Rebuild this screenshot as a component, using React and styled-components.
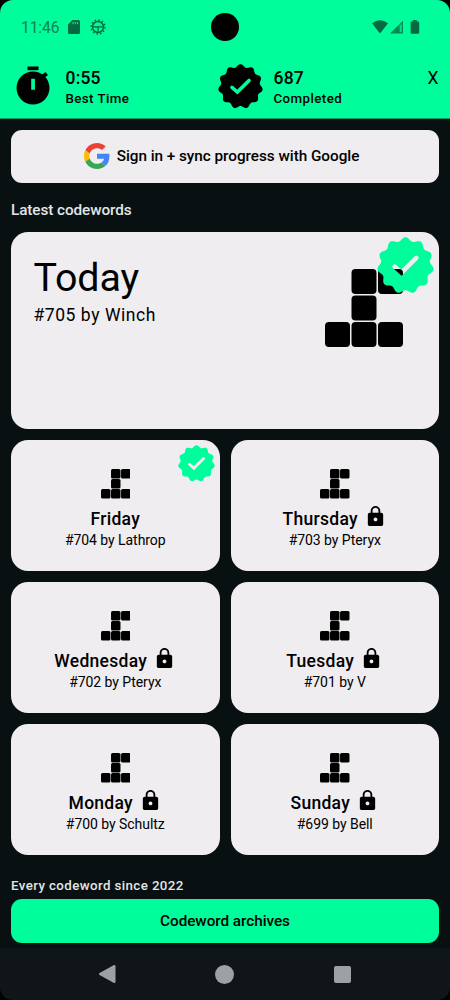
import React from "react";
import styled, { createGlobalStyle } from "styled-components";

const puzzles = [
  { day: "Friday", info: "#704 by Lathrop", done: true },
  { day: "Thursday", info: "#703 by Pteryx", locked: true },
  { day: "Wednesday", info: "#702 by Pteryx", locked: true },
  { day: "Tuesday", info: "#701 by V", locked: true },
  { day: "Monday", info: "#700 by Schultz", locked: true },
  { day: "Sunday", info: "#699 by Bell", locked: true },
];

// eleven soft points around a circle of radius 50
const burst = () => {
  const points = [];
  for (let i = 0; i < 220; i++) {
    const a = (i / 220) * Math.PI * 2;
    const r = 46.4 + 3.2 * Math.cos(a * 11);
    points.push(
      `${(50 + r * Math.sin(a)).toFixed(2)} ${(50 - r * Math.cos(a)).toFixed(2)}`
    );
  }
  return "M" + points.join("L") + "Z";
};
const burstPath = burst();

const Verified = ({ id, size }) => (
  <svg width={size} height={size} viewBox="0 0 100 100">
    <mask id={id}>
      <rect width="100" height="100" fill="#fff" />
      <path
        d="M31 52L43 62.5L69 36.5"
        fill="none"
        stroke="#000"
        strokeWidth="8"
        strokeLinecap="round"
        strokeLinejoin="miter"
      />
    </mask>
    <path d={burstPath} fill="currentColor" mask={`url(#${id})`} />
  </svg>
);

const Tiles = ({ size }) => (
  <svg width={size} height={size} viewBox="0 0 78 78">
    {[
      [26.5, 0],
      [53, 0],
      [26.5, 26.5],
      [0, 53],
      [26.5, 53],
      [53, 53],
    ].map(([x, y]) => (
      <rect key={`${x}-${y}`} x={x} y={y} width="25" height="25" rx="4" />
    ))}
  </svg>
);

const Lock = () => (
  <svg width="23" height="23" viewBox="0 0 24 24">
    <path d="M18 8h-1V6c0-2.76-2.24-5-5-5S7 3.24 7 6v2H6c-1.1 0-2 .9-2 2v10c0 1.1.9 2 2 2h12c1.1 0 2-.9 2-2V10c0-1.1-.9-2-2-2zm-6 9c-1.1 0-2-.9-2-2s.9-2 2-2 2 .9 2 2-.9 2-2 2zm3.1-9H8.9V6c0-1.71 1.39-3.1 3.1-3.1s3.1 1.39 3.1 3.1v2z" />
  </svg>
);

const Timer = () => (
  <svg width="34" height="40" viewBox="0 0 34 40">
    <rect x="11.5" y="0.5" width="11" height="3.7" />
    <path d="M26 11L30.8 7.5" stroke="#000" strokeWidth="4" />
    <path
      fillRule="evenodd"
      d="M17 5.5a16.5 16.5 0 1 0 0 33a16.5 16.5 0 1 0 0-33zM15.2 12.8h3.7v11h-3.7z"
    />
  </svg>
);

const Google = () => (
  <svg width="26" height="26" viewBox="0 0 48 48">
    <path
      fill="#EA4335"
      d="M24 9.5c3.54 0 6.71 1.22 9.21 3.6l6.85-6.85C35.9 2.38 30.47 0 24 0 14.62 0 6.51 5.38 2.56 13.22l7.98 6.19C12.43 13.72 17.74 9.5 24 9.5z"
    />
    <path
      fill="#4285F4"
      d="M46.98 24.55c0-1.57-.15-3.09-.38-4.55H24v9.02h12.94c-.58 2.96-2.26 5.48-4.78 7.18l7.73 6c4.51-4.18 7.09-10.36 7.09-17.65z"
    />
    <path
      fill="#FBBC05"
      d="M10.53 28.59c-.48-1.45-.76-2.99-.76-4.59s.27-3.14.76-4.59l-7.98-6.19C.92 16.46 0 20.12 0 24c0 3.88.92 7.54 2.56 10.78l7.97-6.19z"
    />
    <path
      fill="#34A853"
      d="M24 48c6.48 0 11.93-2.13 15.89-5.81l-7.73-6c-2.15 1.45-4.92 2.3-8.16 2.3-6.26 0-11.57-4.22-13.47-9.91l-7.98 6.19C6.51 42.62 14.62 48 24 48z"
    />
  </svg>
);

const SdCard = () => (
  <svg width="12" height="14" viewBox="0 0 12 14">
    <path
      fillRule="evenodd"
      d="M4.5 0H10.5Q12 0 12 1.5V12.5Q12 14 10.5 14H1.5Q0 14 0 12.5V4.5zM4.5 2v2.2h1V2zM6.8 2v2.2h1V2zM9.1 2v2.2h1V2z"
    />
  </svg>
);

const Gear = () => (
  <svg width="16" height="16" viewBox="0 0 16 16" fill="none" stroke="currentColor">
    <circle cx="8" cy="8" r="5.5" strokeWidth="1.5" />
    <circle cx="8" cy="8" r="7" strokeWidth="1.4" strokeDasharray="1.57 2.095" />
    <path d="M2.5 7.8H13.5M8 8V13.5" strokeWidth="1.3" />
  </svg>
);

const Signals = () => (
  <svg width="48" height="15" viewBox="0 0 48 15">
    <path d="M0 3.2Q8 -2.5 16 3.2L8 13.5z" />
    <path d="M31 0.8V13.5H18z" opacity=".8" />
    <path d="M27.6 6V12.3H29.8V3.6z" fill="#00fd9b" opacity=".75" />
    <path d="M40.8 0h4v1.4h1.2q1.2 0 1.2 1.2v10q0 1.2-1.2 1.2h-6.2q-1.2 0-1.2-1.2v-10q0-1.2 1.2-1.2h1z" />
  </svg>
);

export default function App() {
  return (
    <Page>
      <Global />
      <Screen>
        <Header>
          <StatusBar>
            <StatusLeft>
              <Clock>11:46</Clock>
              <SdCard />
              <Gear />
            </StatusLeft>
            <Camera />
            <StatusRight>
              <Signals />
            </StatusRight>
          </StatusBar>
          <Stats>
            <Stat>
              <TimerBox>
                <Timer />
              </TimerBox>
              <div>
                <StatValue>0:55</StatValue>
                <StatLabel>Best Time</StatLabel>
              </div>
            </Stat>
            <Stat>
              <StatBadge>
                <Verified id="stat" size={45} />
              </StatBadge>
              <div>
                <StatValue>687</StatValue>
                <StatLabel>Completed</StatLabel>
              </div>
            </Stat>
            <Close>X</Close>
          </Stats>
        </Header>
        <Content>
          <SignIn>
            <Google />
            <span>Sign in + sync progress with Google</span>
          </SignIn>
          <Heading>Latest codewords</Heading>
          <TodayCard>
            <div>
              <TodayTitle>Today</TodayTitle>
              <TodayInfo>#705 by Winch</TodayInfo>
            </div>
            <TodayTiles>
              <Tiles size={78} />
            </TodayTiles>
            <Badge $top={5} $right={5}>
              <Verified id="today" size={57} />
            </Badge>
          </TodayCard>
          <Grid>
            {puzzles.map((p) => (
              <Card key={p.day}>
                <Tiles size={29.5} />
                <DayRow>
                  <Day>{p.day}</Day>
                  {p.locked && <Lock />}
                </DayRow>
                <Info>{p.info}</Info>
                {p.done && (
                  <Badge $top={5} $right={5}>
                    <Verified id={p.day} size={37} />
                  </Badge>
                )}
              </Card>
            ))}
          </Grid>
          <Every>Every codeword since 2022</Every>
          <Archives>Codeword archives</Archives>
        </Content>
        <NavBar>
          <svg width="18" height="20" viewBox="0 0 18 20">
            <path d="M2 10L16.5 2V18z" strokeWidth="2" strokeLinejoin="round" />
          </svg>
          <NavHome />
          <NavRecent />
        </NavBar>
      </Screen>
    </Page>
  );
}

const Global = createGlobalStyle`
  body {
    margin: 0;
    background: #000;
  }
  * {
    box-sizing: border-box;
  }
  svg {
    display: block;
    flex: none;
  }
`;
const Page = styled.div`
  width: 450px;
  height: 1000px;
  background: #000;
  font-family: Roboto, "Liberation Sans", sans-serif;
  color: #000;
`;
const Screen = styled.div`
  display: flex;
  flex-direction: column;
  width: 450px;
  height: 1000px;
  border-radius: 13px;
  overflow: hidden;
  background: #091012;
`;
const Header = styled.div`
  height: 119px;
  background: #00fd9b;
  border-bottom: 1px solid #0a9a63;
`;
const StatusBar = styled.div`
  display: grid;
  grid-template-columns: 1fr 28px 1fr;
  align-items: center;
  height: 54px;
  color: #056a42;
  fill: #056a42;
`;
const StatusLeft = styled.div`
  display: flex;
  align-items: center;
  padding-left: 21px;
  svg + svg {
    margin-left: 10px;
  }
`;
const Clock = styled.span`
  width: 47px;
  padding-top: 1px;
  font-size: 15.6px;
  letter-spacing: -0.1px;
  color: #12804f;
`;
const Camera = styled.div`
  width: 28px;
  height: 28px;
  border-radius: 50%;
  background: #000;
`;
const StatusRight = styled.div`
  display: flex;
  justify-content: flex-end;
  padding-right: 30px;
`;
const Stats = styled.div`
  display: flex;
  padding-top: 10px;
`;
const Stat = styled.div`
  display: flex;
  width: 208px;
  height: 44px;
`;
const TimerBox = styled.div`
  width: 65.5px;
  padding: 1.5px 0 0 15.5px;
`;
const StatBadge = styled.div`
  width: 65.5px;
  padding-left: 10px;
`;
const StatValue = styled.div`
  margin-top: 2px;
  font-size: 17.5px;
  line-height: 24px;
  font-weight: 500;
  letter-spacing: 0.2px;
`;
const StatLabel = styled.div`
  font-size: 13.3px;
  line-height: 18px;
  font-weight: 500;
  letter-spacing: 0.42px;
`;
const Close = styled.div`
  padding: 2px 0 0 11.5px;
  font-size: 17.5px;
  line-height: 24px;
`;
const Content = styled.div`
  flex: 1;
  padding: 10.5px 11px 0;
`;
const SignIn = styled.div`
  display: flex;
  align-items: center;
  justify-content: center;
  gap: 7px;
  height: 53px;
  padding-right: 7px;
  border-radius: 11px;
  background: #efedf0;
  font-size: 15.3px;
  font-weight: 500;
  letter-spacing: -0.03px;
`;
const Heading = styled.div`
  margin-top: 16.5px;
  height: 33px;
  font-size: 15.3px;
  line-height: 22px;
  font-weight: 500;
  letter-spacing: -0.08px;
  color: #e2e6e6;
`;
const TodayCard = styled.div`
  position: relative;
  display: flex;
  justify-content: space-between;
  height: 197px;
  padding: 22px 36.5px 0 22.5px;
  border-radius: 17px;
  background: #efedf0;
`;
const TodayTitle = styled.div`
  font-size: 39.4px;
  line-height: 48px;
  letter-spacing: -0.1px;
`;
const TodayInfo = styled.div`
  font-size: 17.5px;
  line-height: 27px;
  letter-spacing: 0.55px;
`;
const TodayTiles = styled.div`
  padding-top: 14.5px;
`;
const Badge = styled.div`
  position: absolute;
  top: ${({ $top }) => $top}px;
  right: ${({ $right }) => $right}px;
  color: #00fd9b;
`;
const Grid = styled.div`
  display: grid;
  grid-template-columns: 1fr 1fr;
  gap: 11px;
  margin-top: 11px;
`;
const Card = styled.div`
  position: relative;
  display: flex;
  flex-direction: column;
  align-items: center;
  height: 131px;
  padding-top: 29px;
  border-radius: 17px;
  background: #efedf0;
`;
const DayRow = styled.div`
  display: flex;
  gap: 6px;
  height: 26px;
  margin-top: 7px;
  svg {
    margin-top: -1px;
  }
`;
const Day = styled.div`
  font-size: 17.5px;
  line-height: 26px;
  font-weight: 500;
  letter-spacing: 0.28px;
`;
const Info = styled.div`
  font-size: 14px;
  line-height: 17px;
  letter-spacing: -0.05px;
`;
const Every = styled.div`
  margin-top: 22px;
  height: 22px;
  font-size: 13.3px;
  line-height: 18px;
  font-weight: 500;
  letter-spacing: 0.4px;
  color: #e2e6e6;
`;
const Archives = styled.div`
  height: 44px;
  border-radius: 11px;
  background: #00fd9b;
  text-align: center;
  font-size: 15.3px;
  line-height: 44px;
  font-weight: 500;
  letter-spacing: -0.05px;
`;
const NavBar = styled.div`
  display: flex;
  align-items: center;
  gap: 99px;
  height: 52px;
  padding-left: 98px;
  background: #101517;
  fill: #9da1a4;
  stroke: #9da1a4;
`;
const NavHome = styled.div`
  width: 19px;
  height: 19px;
  border-radius: 50%;
  background: #9da1a4;
`;
const NavRecent = styled.div`
  width: 17px;
  height: 17px;
  margin-left: 0.5px;
  border-radius: 2px;
  background: #9da1a4;
`;
